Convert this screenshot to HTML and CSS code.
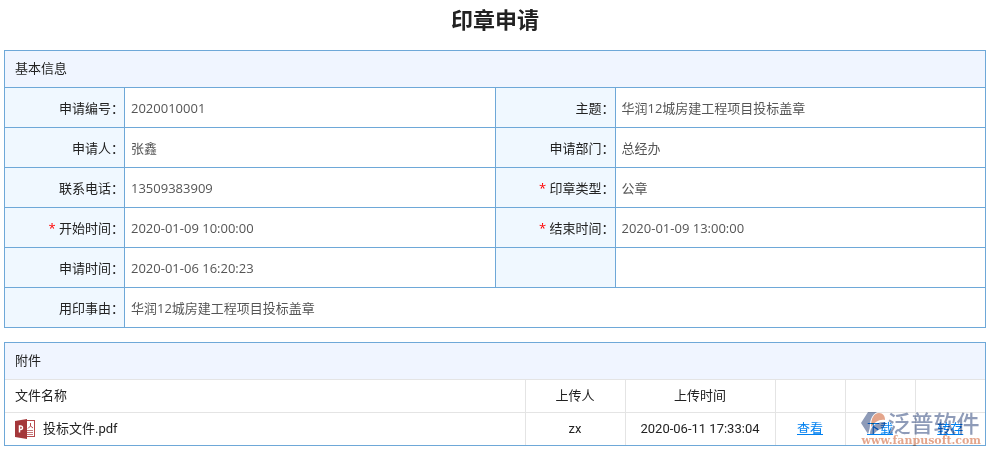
FILE: index.html
```html
<!DOCTYPE html>
<html lang="zh-CN">
<head>
    <meta charset="UTF-8">
    <meta name="viewport" content="width=device-width, initial-scale=1.0">
    <title>印章申请</title>
    <link rel="stylesheet" href="styles.css">
</head>
<body>

<h1>印章申请</h1>

<table class="info">
    <colgroup>
        <col class="col-label">
        <col>
        <col class="col-label">
        <col>
    </colgroup>
    <thead>
        <tr>
            <th class="section-title" colspan="4">基本信息</th>
        </tr>
    </thead>
    <tbody>
        <tr>
            <th scope="row">申请编号：</th>
            <td>2020010001</td>
            <th scope="row">主题：</th>
            <td>华润12城房建工程项目投标盖章</td>
        </tr>
        <tr>
            <th scope="row">申请人：</th>
            <td>张鑫</td>
            <th scope="row">申请部门：</th>
            <td>总经办</td>
        </tr>
        <tr>
            <th scope="row">联系电话：</th>
            <td>13509383909</td>
            <th scope="row"><span class="required">*</span> 印章类型：</th>
            <td>公章</td>
        </tr>
        <tr>
            <th scope="row"><span class="required">*</span> 开始时间：</th>
            <td>2020-01-09 10:00:00</td>
            <th scope="row"><span class="required">*</span> 结束时间：</th>
            <td>2020-01-09 13:00:00</td>
        </tr>
        <tr>
            <th scope="row">申请时间：</th>
            <td>2020-01-06 16:20:23</td>
            <th></th>
            <td></td>
        </tr>
        <tr>
            <th scope="row">用印事由：</th>
            <td colspan="3">华润12城房建工程项目投标盖章</td>
        </tr>
    </tbody>
</table>

<div class="attachments">
    <h2 class="section-title">附件</h2>
    <table class="files">
        <colgroup>
            <col>
            <col class="col-user">
            <col class="col-time">
            <col class="col-action">
            <col class="col-action">
            <col class="col-action">
        </colgroup>
        <thead>
            <tr>
                <th class="file-name">文件名称</th>
                <th>上传人</th>
                <th>上传时间</th>
                <th></th>
                <th></th>
                <th></th>
            </tr>
        </thead>
        <tbody>
            <tr>
                <td class="file-name">
                    <div class="file">
                        <svg class="file-icon" width="20" height="20" viewBox="0 0 20 20">
                            <rect x="11" y="1" width="9" height="17" fill="#b5484b"/>
                            <rect x="12" y="2" width="7" height="15" fill="#fff"/>
                            <path d="M15.500 4v3L13 9.500M15.500 7l2.500 2" fill="none" stroke="#b5484b"/>
                            <path d="M12 11.500h6M12 13.500h6M12 15.500h6" stroke="#c4787a"/>
                            <path d="M0 2L12 0v20L0 18z" fill="#a4373a"/>
                            <path d="M4.500 13.500V7h1.500a1.500 1.800 0 0 1 0 3.600H4.500" fill="none" stroke="#fff" stroke-width="1.500"/>
                        </svg>
                        投标文件.pdf
                    </div>
                </td>
                <td>zx</td>
                <td>2020-06-11 17:33:04</td>
                <td><a href="#">查看</a></td>
                <td><a href="#">下载</a></td>
                <td><a href="#">转存</a></td>
            </tr>
        </tbody>
    </table>
    <div class="watermark">
        <div class="brand">
            <svg width="26" height="24" viewBox="0 0 26 24">
                <path d="M7 1h9C11 4 9 9 9 14c0 3-1 6-2 9L0 12z" fill="#7282a6"/>
                <path d="M10 16C10 7 13 2 18 2c4 0 6 3 6 7-6-1-10 2-14 7z" fill="#dd8e6e"/>
                <path d="M9 23c0-7 5-12 14-12l2 1-4 6c-3 0-6 2-8 5z" fill="#7282a6"/>
            </svg>
            <span>泛普软件</span>
        </div>
        <div class="site">www.fanpusoft.com</div>
    </div>
</div>

</body>
</html>
```
FILE: styles.css
```css
body {
    margin: 0 5px 10px 4px;
    font-family: "Open Sans", "Noto Sans CJK SC", sans-serif;
    font-size: 13px;
    line-height: 20px;
    color: #222;
    background-color: #fff;
}
h1 {
    margin: 0;
    padding: 3px 0 15px;
    font-size: 22px;
    line-height: 32px;
    text-align: center;
}
table {
    width: 100%;
    table-layout: fixed;
    border-collapse: collapse;
}
th {
    font-weight: normal;
}
.section-title {
    margin: 0;
    padding: 7px 10px 9px;
    font-size: 13px;
    font-weight: normal;
    text-align: left;
    background-color: #f0f5ff;
}
.info th, .info td {
    height: 40px;
    box-sizing: border-box;
    border: 1px solid #6ea8d8;
}
.info .section-title {
    height: 37px;
}
.info tbody th {
    padding: 0;
    text-align: right;
    background-color: #f0f8ff;
}
.info td {
    padding: 0 6px;
    color: #555;
}
.col-label {
    width: 120px;
}
.required {
    color: red;
}
.attachments {
    position: relative;
    margin-top: 14px;
    border: 1px solid #6ea8d8;
}
.files {
    font-family: Roboto, "Noto Sans CJK SC", sans-serif;
}
.files th, .files td {
    height: 32px;
    padding: 0;
    text-align: center;
    border: 1px solid #e4e4e4;
}
.files th:first-child, .files td:first-child {
    border-left: none;
}
.files th:last-child, .files td:last-child {
    border-right: none;
}
.files tbody td {
    border-bottom: none;
}
.files .file-name {
    padding: 0 10px;
    text-align: left;
}
.file {
    display: flex;
    align-items: center;
    gap: 8px;
}
.col-user {
    width: 100px;
}
.col-time {
    width: 150px;
}
.col-action {
    width: 70px;
}
a {
    color: #0080f0;
    text-decoration: underline;
}
/* logo lies over the last cells */
.watermark {
    position: absolute;
    right: 4px;
    bottom: -2px;
    opacity: 0.8;
    mix-blend-mode: multiply;
    pointer-events: none;
}
.brand {
    display: flex;
    align-items: center;
    height: 24px;
    font-size: 23px;
    font-weight: 500;
    line-height: 24px;
    color: #7282a6;
}
.site {
    font-family: "DejaVu Serif", serif;
    font-size: 11px;
    font-weight: bold;
    line-height: 12px;
    color: #dd8e6e;
}
```
